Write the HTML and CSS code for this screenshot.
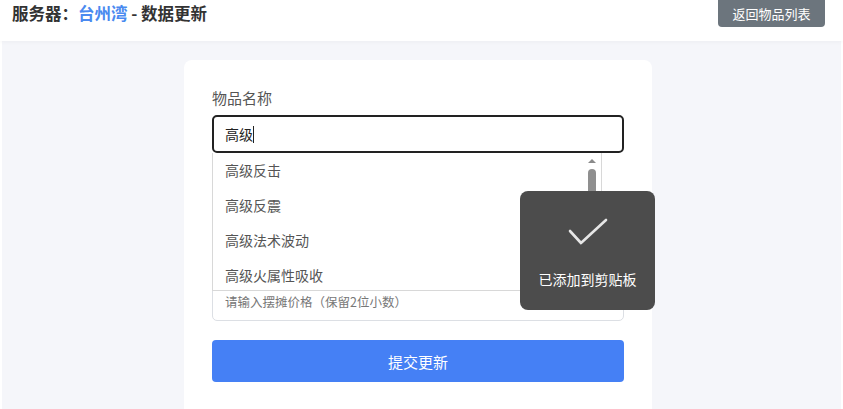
FILE: index.html
```html
<!DOCTYPE html>
<html lang="zh-CN">
<head>
<meta charset="utf-8">
<title>数据更新</title>
<link rel="stylesheet" href="styles.css">
</head>
<body>
<header class="topbar">
  <h1 class="title">服务器：<span class="server">台州湾</span> - 数据更新</h1>
  <button class="back-btn">返回物品列表</button>
</header>
<main class="page">
  <section class="card">
    <div class="group">
      <label class="label">物品名称</label>
      <div class="combo">
        <div class="input focused">高级<span class="caret"></span></div>
        <ul class="dropdown">
          <li>高级反击</li>
          <li>高级反震</li>
          <li>高级法术波动</li>
          <li>高级火属性吸收</li>
          <div class="sb-arrow"></div>
          <div class="sb-thumb"></div>
        </ul>
      </div>
    </div>
    <div class="group">
      <label class="label covered">物品数量</label>
      <div class="input placeholder"><span class="covered">请输入物品数量</span></div>
    </div>
    <div class="group">
      <label class="label covered">摆摊价格</label>
      <div class="input placeholder">请输入摆摊价格（保留2位小数）</div>
    </div>
    <button class="submit">提交更新</button>
  </section>
</main>
<div class="toast">
  <svg class="check" width="40" height="28" viewBox="0 0 40 28"><polyline points="2,13 13,25 38,2" fill="none" stroke="#e6e6e6" stroke-width="2.6" stroke-linecap="round" stroke-linejoin="round"/></svg>
  <div class="toast-text">已添加到剪贴板</div>
</div>
</body>
</html>
```
FILE: styles.css
```css
* { box-sizing: border-box; }
html, body { margin: 0; padding: 0; }
body {
  font-family: "Noto Sans CJK SC", "Noto Sans", sans-serif;
  background: #ffffff;
  width: 843px;
  height: 409px;
  overflow: hidden;
}
.topbar {
  height: 41px;
  display: flex;
  justify-content: space-between;
  align-items: flex-start;
  padding: 0 18px 0 12px;
  background: #fff;
  box-shadow: 0 1px 4px rgba(0,0,0,0.04);
  position: relative;
  z-index: 1;
}
.title {
  margin: 0;
  font-size: 16.5px;
  line-height: 26px;
  font-weight: 700;
  color: #333;
}
.server { color: #4a8af0; }
.back-btn {
  height: 27px;
  padding: 0 14.5px;
  border: none;
  border-radius: 0 0 4px 4px;
  background: #6c757d;
  color: #fff;
  font-family: inherit;
  font-size: 13px;
  line-height: 25px;
}
.page {
  background: #f5f6fa;
  height: 368px;
  margin: 0 2px;
  padding: 19px 0 0 182px;
  overflow: hidden;
}
.card {
  width: 468px;
  height: 349px;
  background: #fff;
  border-radius: 8px 8px 0 0;
  padding: 28px 28px 0;
}
.group { margin-bottom: 19px; }
.label {
  display: block;
  font-size: 15px;
  line-height: 20px;
  color: #555;
  margin-bottom: 7px;
}
.covered { visibility: hidden; }
.combo { position: relative; }
.input {
  height: 38px;
  border: 1px solid #dcdfe4;
  border-radius: 5px;
  padding: 0 12px;
  font-size: 12.5px;
  line-height: 36px;
  color: #222;
}
.input.focused {
  border: 2px solid #222;
  padding: 0 11px;
  font-size: 14px;
  line-height: 34px;
}
.input.placeholder { color: #777; }
.caret {
  display: inline-block;
  width: 1px;
  height: 17px;
  background: #222;
  vertical-align: -3px;
}
.dropdown {
  position: absolute;
  top: 100%;
  left: 0;
  width: 390px;
  height: 138px;
  margin: 0;
  padding: 0;
  list-style: none;
  background: #fff;
  border: 1px solid #d8d8d8;
  border-top: none;
  overflow: hidden;
  z-index: 5;
}
.dropdown li {
  height: 35px;
  line-height: 35px;
  padding-left: 12px;
  font-size: 14px;
  color: #555;
}
.sb-arrow {
  position: absolute;
  top: 6px;
  right: 5px;
  width: 0;
  height: 0;
  border-left: 4px solid transparent;
  border-right: 4px solid transparent;
  border-bottom: 4px solid #8a8a8a;
}
.sb-thumb {
  position: absolute;
  top: 16px;
  right: 5px;
  width: 8px;
  height: 70px;
  border-radius: 4px;
  background: #8f8f8f;
}
.submit {
  display: block;
  width: 100%;
  height: 42px;
  border: none;
  border-radius: 4px;
  background: #4580f5;
  color: #fff;
  font-family: inherit;
  font-size: 15px;
}
.toast {
  position: fixed;
  left: 520px;
  top: 191px;
  width: 135px;
  height: 119px;
  border-radius: 8px;
  background: #4c4c4c;
  display: flex;
  flex-direction: column;
  align-items: center;
  z-index: 10;
}
.check { margin-top: 27px; }
.toast-text {
  margin-top: 23px;
  color: #fff;
  font-size: 14px;
  line-height: 20px;
}
```
